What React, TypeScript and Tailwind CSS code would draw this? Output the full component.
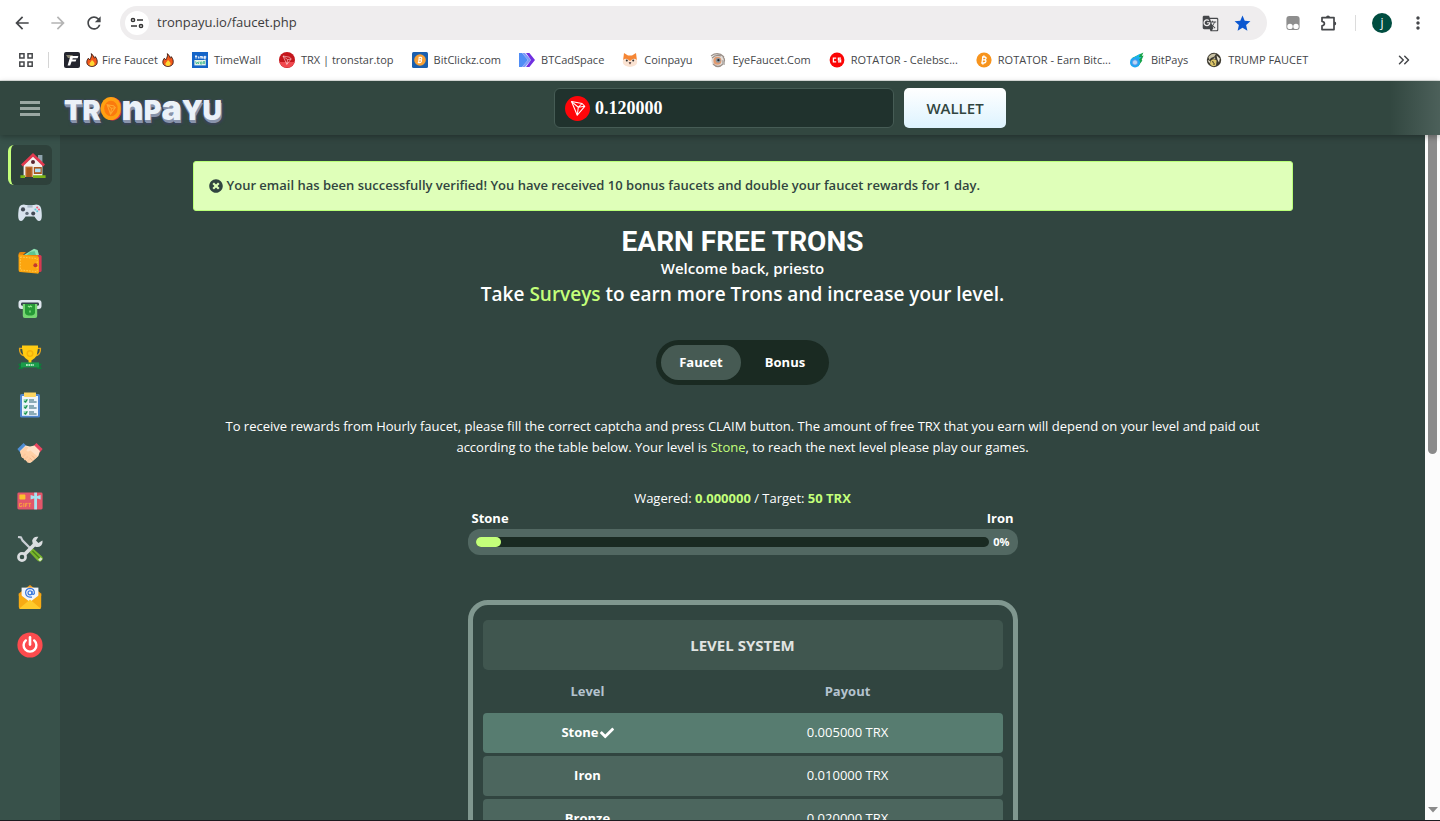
import React from 'react';
import { FaCheck, FaTimesCircle } from 'react-icons/fa';
import { MdArrowBack, MdArrowForward, MdGTranslate, MdMoreVert, MdRefresh, MdStar } from 'react-icons/md';
import { ChevronsRight } from 'lucide-react';

const TronMark: React.FC<{ className?: string; stroke?: string }> = ({ className, stroke = '#fff' }) => (
  <svg viewBox="0 0 24 24" className={className} fill="none" stroke={stroke} strokeWidth="1.4" strokeLinejoin="round">
    <path d="M3.4 3.4 L17.4 6 L21 9.8 L11 21.6 Z" />
    <path d="M3.4 3.4 L12.4 11 L21 9.8 M12.4 11 L17.4 6 M12.4 11 L11 21.6" />
  </svg>
);

const Fire: React.FC = () => (
  <svg viewBox="0 0 12 16" className="w-3 h-4 shrink-0">
    <path d="M5.4 1.6 C7 3.4 8 4.8 8.4 6.2 C9 5.8 9.2 5.2 9.2 4.6 C11 6.8 11.4 8.8 11.2 10.6 C11 13 9 14.4 6 14.4 C3 14.4 1 13 .8 10.6 C.7 8.6 1.4 7.4 2.4 6.2 C3.2 7.2 3.4 7.6 3.6 8 C5 6.2 5.8 3.8 5.4 1.6 Z" fill="#f2581c" stroke="#3a1a10" strokeWidth=".9" />
    <path d="M6 8 C8 9.6 8.8 11 8.6 12 C8.4 13.2 7.4 14 6 14 C4.4 14 3.4 13.2 3.4 12 C3.4 10.8 5 10 6 8 Z" fill="#fdd835" />
  </svg>
);

const favicons = {
  fire: (
    <svg viewBox="0 0 16 16" className="w-4 h-4">
      <rect width="16" height="16" rx="2" fill="#23252e" />
      <path d="M2 3 H9 L7 6 H4 Z" fill="#8a8672" />
      <path d="M6.4 4 H14.4 L13.6 6.2 H8.8 L8.3 7.6 H12.4 L11.6 9.6 H7.6 L6.2 13.4 H3.6 Z" fill="#fff" />
    </svg>
  ),
  timewall: (
    <svg viewBox="0 0 16 16" className="w-4 h-4">
      <rect width="16" height="16" fill="#1565c8" />
      <path d="M3 4.6 H5.2 M4 3 V6.6 M6.4 4.4 V6.6 M8 6.6 V4.6 H10.6 V6.6 M9.3 4.6 V6.6 M12 5.6 H13.8 V4.4 H12 V6.8 H14" stroke="#fff" strokeWidth=".9" fill="none" />
      <rect x="2.4" y="8" width="11.4" height="5.4" fill="#e8f5e9" />
      <path d="M3.6 9.4 L4.4 12 L5.4 10 L6.4 12 L7 9.4 M8.4 10 H10 V12 H8.4 Z M11.4 9 V12 M12.6 9 V12" stroke="#35b58a" strokeWidth=".8" fill="none" />
    </svg>
  ),
  trx: (
    <svg viewBox="0 0 16 16" className="w-4 h-4">
      <circle cx="8" cy="8" r="8" fill="#c4161c" />
      <path d="M.4 10 A8 8 0 0 0 15.6 10 Z" fill="#f0494f" />
      <path d="M4 4 L10.6 5.2 L12.2 7 L7.8 12.4 Z M4 4 L8.6 7.6 L12.2 7 M8.6 7.6 L7.8 12.4" fill="none" stroke="#ffd9d9" strokeWidth=".6" />
    </svg>
  ),
  bitclickz: (
    <svg viewBox="0 0 16 16" className="w-4 h-4">
      <rect width="16" height="16" rx="1.5" fill="#1a5fae" />
      <circle cx="8" cy="8" r="5.8" fill="#f7a035" />
      <path d="M6.6 5.4 H8.8 Q10 5.6 9.6 6.8 Q9.4 7.8 8.4 7.8 Q9.8 8 9.4 9.4 Q9 10.6 7.8 10.6 H5.8 M7.2 5.4 L6.6 10.6 M6.9 7.9 H8.6" fill="none" stroke="#fff" strokeWidth="1.1" />
    </svg>
  ),
  btcad: (
    <svg viewBox="0 0 16 16" className="w-4 h-4">
      <path d="M0 1 H3 L9 8 L3 15 H0 Z" fill="#4f8df5" />
      <path d="M3 1 H6 L12 8 L6 15 H3 L9 8 Z" fill="#7f9cf8" />
      <path d="M7 1 H10.4 L16 8 L10.4 15 H7 L12 8 Z" fill="#7030e0" />
    </svg>
  ),
  coinpayu: (
    <svg viewBox="0 0 16 16" className="w-4 h-4">
      <path d="M2 1 L6 3.4 H10 L14 1 L15 9 H1 Z" fill="#f58634" />
      <path d="M1 8 Q3 6 5.4 7 L8 9 L10.6 7 Q13 6 15 8 Q16 12 12.6 13.8 Q8 16 3.4 13.8 Q0 12 1 8 Z" fill="#fbe3d2" />
      <circle cx="4.8" cy="8.6" r="1" fill="#333" />
      <circle cx="11.2" cy="8.6" r="1" fill="#333" />
      <path d="M6.6 10.2 H9.4 L8 12.4 Z" fill="#4a3030" />
    </svg>
  ),
  eye: (
    <svg viewBox="0 0 16 16" className="w-4 h-4">
      <circle cx="8" cy="8.4" r="6.6" fill="#e3ddd8" />
      <path d="M1 4 Q8 -1 14 5 M2 6 Q6 2 11 4 M3 12 Q8 17 13 12 Q16 8 13 5" fill="none" stroke="#9a8f88" strokeWidth="1.2" />
      <circle cx="7.4" cy="8.8" r="4" fill="#e09a70" />
      <circle cx="8.2" cy="8.4" r="2.4" fill="#8796a2" />
      <circle cx="8.4" cy="8.2" r="1.1" fill="#222" />
      <path d="M12 8 Q15 8 15 13 L12 12 Z" fill="#b5b0ac" />
    </svg>
  ),
  celebs: (
    <svg viewBox="0 0 16 16" className="w-4 h-4">
      <circle cx="8" cy="8" r="7.4" fill="#fb0505" />
      <path d="M7.2 6.2 H4.4 V9.8 H7.2 M12 6.2 H9.4 V8 H11.6 V9.8 H9" fill="none" stroke="#fff" strokeWidth="1.3" />
    </svg>
  ),
  bitcoin: (
    <svg viewBox="0 0 16 16" className="w-4 h-4">
      <circle cx="8" cy="8" r="7.6" fill="#f7941d" />
      <path d="M6 5 H8.6 Q10.4 5.2 10 6.6 Q9.6 7.8 8.4 7.8 Q10.4 8 9.8 9.8 Q9.4 11 7.8 11 H5.2 M6.8 5 L6 11 M6.4 7.9 H8.8 M8 3.4 L7.8 5 M7 11 L6.8 12.6" fill="none" stroke="#fff" strokeWidth="1.3" />
    </svg>
  ),
  bitpays: (
    <svg viewBox="0 0 16 16" className="w-4 h-4">
      <path d="M3 6 L14.4 .6 L12.8 4 L14.6 3.6 L12.6 8 L13.4 8.4 L9 14.4 Z" fill="#16a34a" />
      <path d="M1.4 7.4 L11.4 1.4 L10 5 L12.4 5 L8 10 Z" fill="#19b5e8" />
      <circle cx="6" cy="10.4" r="5" fill="#22a6f2" />
      <circle cx="6" cy="10.4" r="2.6" fill="#b9d7f5" stroke="#5d8fe8" strokeWidth=".8" />
    </svg>
  ),
  trump: (
    <svg viewBox="0 0 16 16" className="w-4 h-4">
      <circle cx="8" cy="8" r="7.2" fill="#3d3a30" />
      <path d="M2.4 5 Q5 1 10 1.8 L8.4 4.4 L5 6 L3.4 8 Z" fill="#c9c2a4" />
      <path d="M4.6 9 Q7 6 10.6 8.4 L10 13.4 Q6 15.4 4 12 Z" fill="#dcc568" />
      <path d="M10.6 3.6 L13.8 6.6 L13 10.6 L11.4 7.6 Z M1.6 8 L4 9 L3.6 11.6 Z M8 5.4 L9.6 6.2 L7.6 7 Z" fill="#eee9d8" />
      <path d="M6 9.6 L8 10.4 M7 12 H9" stroke="#2a2820" strokeWidth=".9" />
    </svg>
  ),
};

const bookmarks = [
  { icon: favicons.timewall, label: 'TimeWall' },
  { icon: favicons.trx, label: 'TRX | tronstar.top' },
  { icon: favicons.bitclickz, label: 'BitClickz.com' },
  { icon: favicons.btcad, label: 'BTCadSpace' },
  { icon: favicons.coinpayu, label: 'Coinpayu' },
  { icon: favicons.eye, label: 'EyeFaucet.Com' },
  { icon: favicons.celebs, label: 'ROTATOR - Celebsc...' },
  { icon: favicons.bitcoin, label: 'ROTATOR - Earn Bitc...' },
  { icon: favicons.bitpays, label: 'BitPays' },
  { icon: favicons.trump, label: 'TRUMP FAUCET' },
];

const BrowserBar: React.FC = () => (
  <div className="bg-white text-[#45474a] border-b border-[#dfe3e1] shrink-0">
    <div className="h-[46px] flex items-center pl-3 pr-3">
      <div className="flex items-center gap-4 w-27">
        <button aria-label="Back"><MdArrowBack size={20} /></button>
        <button aria-label="Forward" className="text-[#b4b4b4]"><MdArrowForward size={20} /></button>
        <button aria-label="Reload"><MdRefresh size={20} /></button>
      </div>
      <div className="flex-1 h-[34px] rounded-full bg-[#efedee] flex items-center pl-[5px] pr-[15px]">
        <button aria-label="Site information" className="w-6 h-6 rounded-full bg-white flex items-center justify-center">
          <svg viewBox="0 0 14 14" className="w-[14px] h-[14px]" fill="none" stroke="#333" strokeWidth="1.5">
            <circle cx="3" cy="4" r="1.6" />
            <path d="M7 4 H13 M1 10 H7" />
            <circle cx="11" cy="10" r="1.6" />
          </svg>
        </button>
        <input
          aria-label="Address"
          defaultValue="tronpayu.io/faucet.php"
          className="flex-1 ml-2 bg-transparent text-[13px] text-[#3c3c3c] outline-none"
        />
        <button aria-label="Translate" className="mr-[14px]"><MdGTranslate size={17} /></button>
        <button aria-label="Bookmark" className="text-[#0b57d0]"><MdStar size={19} /></button>
      </div>
      <div className="flex items-center ml-[18px]">
        <svg viewBox="0 0 16 16" className="w-4 h-4">
          <rect x="1.4" y="1" width="13.2" height="14" rx="3" fill="#8e8e8e" />
          <circle cx="5" cy="11.4" r="2.7" fill="#fff" />
          <circle cx="11" cy="11.4" r="2.7" fill="#fff" />
        </svg>
        <button aria-label="Extensions" className="ml-[18px]">
          <svg viewBox="0 0 20 20" className="w-5 h-5">
            <path d="M3 4.6 H15 V16.6 H3 V12.8 Q5.4 12.4 5.4 10.6 Q5.4 8.8 3 8.4 Z" fill="none" stroke="#45474a" strokeWidth="1.7" strokeLinejoin="round" />
            <path d="M7 4.4 A2 2 0 0 1 11 4.4 Z M15.2 8.6 A2 2 0 0 1 15.2 12.6 Z" fill="#45474a" />
          </svg>
        </button>
        <div className="w-px h-4 bg-[#dcdcdc] ml-4" />
        <button className="ml-4 w-5 h-5 rounded-full bg-[#004d40] text-white text-xs leading-none flex items-center justify-center">j</button>
        <button aria-label="Menu" className="ml-4"><MdMoreVert size={20} /></button>
      </div>
    </div>
    <div className="h-[34px] flex items-center pl-[18px] pr-[27px] pb-[6px] text-[11px] whitespace-nowrap">
      <svg viewBox="0 0 16 16" className="w-4 h-4 shrink-0" fill="none" stroke="#45474a" strokeWidth="1.5">
        <path d="M1.8 1.8 H6 V6 H1.8 Z M10 1.8 H14.2 V6 H10 Z M1.8 10 H6 V14.2 H1.8 Z M10 10 H14.2 V14.2 H10 Z" />
      </svg>
      <div className="w-px h-4 bg-[#d5d5d5] ml-[14px] mr-[15px]" />
      <nav className="flex-1 flex items-center gap-[18px]">
        <a href="#firefaucet" className="flex items-center gap-[6px]">
          {favicons.fire}
          <span className="flex items-center gap-1"><Fire /> Fire Faucet <Fire /></span>
        </a>
        {bookmarks.map((b) => (
          <a key={b.label} href="#bookmark" className="flex items-center gap-[6px]">
            {b.icon}
            <span>{b.label}</span>
          </a>
        ))}
      </nav>
      <ChevronsRight size={18} />
    </div>
  </div>
);

const Logo: React.FC = () => (
  <a
    href="#home"
    aria-label="Tronpayu"
    className="flex items-baseline font-['Inter'] font-black text-[27px] leading-none text-[#ebf1f8] [text-shadow:0_1px_0_#8893ab,0_2px_0_#8893ab,1px_3px_0_#8893ab,-2px_0_1px_#3e4a5b,2px_-1px_1px_#3e4a5b,0_5px_2px_#3a4455,3px_4px_2px_#3a4455]"
  >
    TR
    <svg viewBox="0 0 24 26" className="w-[23px] h-[25px] -mx-px self-center">
      <ellipse cx="13" cy="13.4" rx="10.6" ry="12" fill="#e8304a" />
      <ellipse cx="11.4" cy="13" rx="10.8" ry="12" fill="#ffa012" />
      <ellipse cx="11.4" cy="13" rx="7" ry="8.2" fill="#fb7a0e" />
      <path d="M7.4 9 L14 10 L16 12 L11 19 Z M7.4 9 L12 13 L16 12 M12 13 L11 19" fill="none" stroke="#ffa830" strokeWidth="1.1" />
    </svg>
    <span className="text-[34px] leading-none">n</span>P<span className="text-[34px] leading-none">a</span>YU
  </a>
);

const Header: React.FC = () => (
  <header className="relative z-10 h-[54px] shrink-0 flex items-center bg-[linear-gradient(to_right,#324740_calc(100%-50px),#4c605a)] shadow-[0_2px_6px_rgba(0,0,0,0.3)]">
    <div className="w-[226px] flex items-center pl-5 gap-6">
      <button aria-label="Toggle menu" className="flex flex-col gap-[3px]">
        <span className="w-5 h-[3px] bg-[#9aa7a2]" />
        <span className="w-5 h-[3px] bg-[#9aa7a2]" />
        <span className="w-5 h-[3px] bg-[#9aa7a2]" />
      </button>
      <Logo />
    </div>
    <div className="flex-1 flex items-center justify-center gap-[10px]">
      <div className="w-[340px] h-10 rounded-md border border-[#465c55] bg-[#20322d] flex items-center gap-[5px] pl-[10px]">
        <span className="w-[25px] h-[25px] rounded-full bg-[#ff060a] flex items-center justify-center">
          <TronMark className="w-[18px] h-[18px]" />
        </span>
        <span className="font-['Liberation_Serif',serif] font-bold text-lg text-white">0.120000</span>
      </div>
      <button className="w-[102px] h-10 rounded-[5px] bg-linear-to-b from-white to-[#ddf3fe] text-[#314540] text-[15px] font-semibold">WALLET</button>
    </div>
    <div className="w-[106px]" />
  </header>
);

const menu = [
  {
    label: 'Home',
    icon: (
      <svg viewBox="0 0 26 26" className="w-[26px] h-[26px]">
        <rect x="18" y="3" width="4.4" height="9" fill="#8fa3ad" />
        <path d="M3.6 13 L13 4 L22.4 13 V25 H3.6 Z" fill="#f3f0f0" />
        <path d="M13 1 L25 12.6 L23.2 14.4 L13 4.8 L2.8 14.4 L1 12.6 Z" fill="#e2394f" />
        <circle cx="13" cy="10" r="2" fill="#5a2430" />
        <rect x="5.4" y="14.6" width="7.2" height="10.4" fill="#c0692a" />
        <rect x="6.8" y="16" width="4.4" height="9" fill="#a9571f" />
        <rect x="13.8" y="15" width="8" height="7" fill="#a9571f" />
        <rect x="15" y="16.6" width="5.6" height="3.6" fill="#a9dcf5" />
        <path d="M.4 23.2 H5 V26 H.4 Z M13 23.2 H25.6 V26 H13 Z" fill="#7cb518" />
      </svg>
    ),
  },
  {
    label: 'Games',
    icon: (
      <svg viewBox="0 0 24 24" className="w-6 h-6">
        <path d="M3.4 4 Q6 3 8 4 H16 Q18 3 20.6 4 Q23 5 23.4 9 Q24.4 17 23 19 Q21 21.4 18.6 18.6 L16.4 15.6 H7.6 L5.4 18.6 Q3 21.4 1 19 Q-.4 17 .6 9 Q1 5 3.4 4 Z" fill="#d8e3ee" />
        <rect x="9.4" y="4" width="5.2" height="2.6" fill="#a9b9c9" />
        <circle cx="5" cy="8.4" r="2.1" fill="#424a55" />
        <circle cx="9" cy="12.4" r="1.7" fill="#5f6b78" />
        <circle cx="15.2" cy="12.4" r="2" fill="#424a55" />
        <circle cx="17.4" cy="8.4" r="1" fill="#5ec8d8" />
        <circle cx="21" cy="8.4" r="1" fill="#ef5a74" />
        <circle cx="19.2" cy="6.6" r="1" fill="#ef5a74" />
        <circle cx="19.2" cy="10.2" r="1" fill="#5ec8d8" />
      </svg>
    ),
  },
  {
    label: 'Wallet',
    icon: (
      <svg viewBox="0 0 24 26" className="w-6 h-[26px]">
        <path d="M6 7 L16 .8 L19.6 2 L21 7 Z" fill="#8fe3b4" />
        <path d="M12 4 L16.6 3 L18 7 L9 7 Z" fill="#5fc590" />
        <rect x="17" y="7" width="6.6" height="17" rx="1.6" fill="#d63a52" />
        <path d="M.6 6 Q.6 4 3 4 H8 L5 7 H20 V9 H.6 Z" fill="#e8850c" />
        <path d="M.6 6.4 L20 8.4 Q21 8.6 21 10 V24 Q21 26 19 25.6 L2 24 Q.6 23.8 .6 22 Z" fill="#fca50f" />
        <path d="M2.4 9 L19.2 10.6 V23.6 L2.4 22 Z" fill="none" stroke="#ffd25a" strokeWidth=".8" strokeDasharray="1.6 1.2" />
        <circle cx="17.4" cy="17.2" r="2" fill="#c4372f" />
      </svg>
    ),
  },
  {
    label: 'Withdraw',
    icon: (
      <svg viewBox="0 0 24 24" className="w-6 h-6">
        <rect x=".5" y="3" width="23" height="9" rx="3" fill="#dfe6ee" />
        <rect x="3" y="5.6" width="18" height="3.2" rx="1.4" fill="#33424a" />
        <path d="M4.8 7 H19.2 V19 Q19.2 21 17.2 21 H6.8 Q4.8 21 4.8 19 Z" fill="#76d672" />
        <path d="M7 7 H17 V16 Q16 18.6 12 18.6 Q8 18.6 7 16 Z" fill="#269a36" />
        <path d="M10 9 L11.4 10 L12.6 9 L14 10 M12 13.6 V15.6" fill="none" stroke="#8ee88b" strokeWidth="1.3" />
      </svg>
    ),
  },
  {
    label: 'Leaderboard',
    icon: (
      <svg viewBox="0 0 24 26" className="w-6 h-[26px]">
        <path d="M5 4.4 H1.6 Q1 11 7 12 M19 4.4 H22.4 Q23 11 17 12" fill="none" stroke="#e3a51c" strokeWidth="1.4" />
        <path d="M4 1.4 H20 V4 L18.8 11 Q17.4 14.8 13.4 16.4 V19 H10.6 V16.4 Q6.6 14.8 5.2 11 L4 4 Z" fill="#ffcc12" />
        <circle cx="12" cy="9.6" r="2.8" fill="#ffcc12" stroke="#f5b20a" strokeWidth="1.4" />
        <path d="M0 19.8 H5 V25 H0 L1.8 22.4 Z M24 19.8 H19 V25 H24 L22.2 22.4 Z" fill="#0f7c3a" />
        <rect x="3" y="18.4" width="18" height="5" fill="#1a9c4b" />
        <path d="M8 21 H16" stroke="#d8ffe4" strokeWidth="1.4" strokeDasharray="1.8 .6" />
      </svg>
    ),
  },
  {
    label: 'Tasks',
    icon: (
      <svg viewBox="0 0 22 26" className="w-[22px] h-[26px]">
        <rect x="1" y="2" width="20" height="23.6" rx="1.6" fill="#4f86cf" />
        <rect x="3" y="4" width="16" height="19.8" fill="#eef4fb" />
        <path d="M5 .6 H17 V4 Q17 5 16 5 H6 Q5 5 5 4 Z" fill="#fcd462" />
        <path d="M4.6 7 H8.2 V10.6 H4.6 Z M4.6 13 H8.2 V16.6 H4.6 Z M4.6 19 H8.2 V22.6 H4.6 Z" fill="#9ddfb9" />
        <path d="M5.4 9 L6.4 10 L8.4 7.4 M5.4 15 L6.4 16 L8.4 13.4 M5.4 21 L6.4 22 L8.4 19.4" fill="none" stroke="#1d8f52" strokeWidth="1.2" />
        <path d="M10 8 H15 M10 10 H17.6 M10 14 H15 M10 16 H17.6 M10 20 H15 M10 22 H17.6" stroke="#2b6274" strokeWidth="1.1" />
      </svg>
    ),
  },
  {
    label: 'Referrals',
    icon: (
      <svg viewBox="0 0 26 24" className="w-[26px] h-6">
        <path d="M.4 8 L6.6 2 L9.8 5.2 L3.2 11.4 Z" fill="#4f8ed6" />
        <path d="M25.6 8 L19.4 2 L16.2 5.2 L22.8 11.4 Z" fill="#e84560" />
        <path d="M3 10 L8.6 4.6 L13 5.6 L17.4 4.6 L23 10 L21.4 15 L14.6 21 Q13 22.4 11.4 21.4 L4.4 15.4 Z" fill="#ffe0c6" />
        <path d="M3.2 10.6 L8.6 5.4 L11.4 6.4 L9.4 9.4 Q10.6 11.4 13.4 9.4 L20.8 15.6 L14.6 21 Q13 22.4 11.4 21.4 L4.4 15.4 Z" fill="#ffd0a6" />
        <path d="M18 17.6 L15 14.6 M15.6 19.8 L12.6 16.8" fill="none" stroke="#f0b088" strokeWidth="1" />
        <path d="M5.6 16 L8 13.4 M8 18.4 L10.4 15.8 M10.6 20.6 L12.4 18.4" stroke="#fbc79c" strokeWidth="1.8" strokeLinecap="round" />
      </svg>
    ),
  },
  {
    label: 'Gift codes',
    icon: (
      <svg viewBox="0 0 26 18" className="w-[26px] h-[18px]">
        <rect x=".4" y=".6" width="25.2" height="16.8" rx="1.4" fill="#e2566a" />
        <rect x="2.4" y="2.6" width="6" height="5" rx=".8" fill="#fbc02d" />
        <rect x="17.2" y=".6" width="2.8" height="16.8" fill="#a7e3f2" />
        <path d="M13.6 3 L18.6 4.4 L23.6 3 V7.4 L18.6 6 L13.6 7.4 Z" fill="#a7e3f2" />
        <path d="M5 11.4 H2.6 V14.6 H4.8 V13.2 M6.8 11 V15 M8.6 15 V11.4 H10.6 M8.6 13 H10.2 M11.4 11.4 H14 M12.7 11.4 V15" fill="none" stroke="#f9a03f" strokeWidth="1" />
      </svg>
    ),
  },
  {
    label: 'Tools',
    icon: (
      <svg viewBox="0 0 26 26" className="w-[26px] h-[26px]">
        <path d="M1 1 L4 1.4 L5.4 4.4 L14 13" fill="none" stroke="#c9ced4" strokeWidth="2.2" strokeLinejoin="round" />
        <path d="M12.4 16 L16 12.6 L25 20.6 Q26.4 22.4 24.8 24.4 Q22.6 26.6 20.6 24.8 Z" fill="#78b52c" />
        <path d="M15.4 15 L23.4 23" stroke="#4c7d1d" strokeWidth="1.2" />
        <path d="M23.6 21.2 L25.6 23 L23 25.6 L21.2 23.6 Z" fill="#d6e4c4" />
        <path d="M7 19 L19 7" stroke="#dadde0" strokeWidth="3.8" />
        <path d="M25.4 4.6 L21.4 7 L19 4.6 L21.4 .8 Q16.4 -.2 15.2 4.6 Q15 8.4 18 10.4 Q21.4 11.8 24.2 9.4 Q26 7.4 25.4 4.6 Z" fill="#dadde0" />
        <circle cx="5" cy="21" r="3.6" fill="none" stroke="#dadde0" strokeWidth="2.6" />
      </svg>
    ),
  },
  {
    label: 'Contact',
    icon: (
      <svg viewBox="0 0 24 26" className="w-6 h-[26px]">
        <path d="M.8 9.6 L12 1 L23.2 9.6 V12 H.8 Z" fill="#f39a1a" />
        <path d="M3.6 3.6 H20.4 V18 H3.6 Z" fill="#f2f5fa" />
        <circle cx="12" cy="8.8" r="2" fill="none" stroke="#3776dd" strokeWidth="1.2" />
        <path d="M14 7 V9.6 Q15.2 11.4 16.4 9.4 Q16.6 4.6 12 4.4 Q7.6 4.8 7.6 8.8 Q8 13 12 13.2 H14" fill="none" stroke="#3776dd" strokeWidth="1.2" />
        <path d="M.8 9.6 L12 18 L23.2 9.6 V23 Q23.2 25 21.4 25 H2.6 Q.8 25 .8 23 Z" fill="#f7ab14" />
        <path d="M1.4 24.4 L12 15.6 L22.6 24.4 Q22 25 21.4 25 H2.6 Q2 25 1.4 24.4 Z" fill="#ffca2b" />
      </svg>
    ),
  },
  {
    label: 'Logout',
    icon: (
      <svg viewBox="0 0 26 26" className="w-[26px] h-[26px]">
        <circle cx="13" cy="13" r="12.6" fill="#fc4b4e" />
        <path d="M8.8 8.4 A6.4 6.4 0 1 0 17.2 8.4" fill="none" stroke="#fff" strokeWidth="2.4" strokeLinecap="round" />
        <path d="M13 5.4 V12.6" stroke="#fff" strokeWidth="2.6" strokeLinecap="round" />
      </svg>
    ),
  },
];

const Sidebar: React.FC = () => (
  <aside className="w-15 shrink-0 bg-[#38514a] pt-[10px] px-2">
    <nav className="flex flex-col gap-2">
      {menu.map((item, i) => (
        <a
          key={item.label}
          href="#menu"
          aria-label={item.label}
          className={
            i === 0
              ? 'h-10 rounded-md flex items-center justify-center bg-[#2e413b] border-l-3 border-[#c3ff7a] pl-[2px]'
              : 'h-10 rounded-md flex items-center justify-center'
          }
        >
          {item.icon}
        </a>
      ))}
    </nav>
  </aside>
);

const levels = [
  { name: 'Stone', payout: '0.005000 TRX', current: true },
  { name: 'Iron', payout: '0.010000 TRX', current: false },
  { name: 'Bronze', payout: '0.020000 TRX', current: false },
];

const LevelTable: React.FC = () => (
  <section className="mt-[45px] w-full max-w-[550px] rounded-[20px] border-5 border-[#80978f] px-[10px] pt-[15px] pb-[10px] text-[13px]">
    <h2 className="h-[50px] rounded-[5px] bg-[#40564f] flex items-center justify-center text-[15px] font-bold text-[#e0e4e2]">LEVEL SYSTEM</h2>
    <table className="w-full table-fixed border-separate border-spacing-x-0 border-spacing-y-[3px] text-center">
      <thead>
        <tr className="h-[37px] text-[#b4c3cf]">
          <th className="w-[210px] font-bold">Level</th>
          <th className="font-bold">Payout</th>
        </tr>
      </thead>
      <tbody>
        {levels.map((l) => (
          <tr key={l.name} className={l.current ? 'h-10 [&>td]:bg-[#577c70]' : 'h-10 [&>td]:bg-[#4c665e]'}>
            <td className="rounded-l font-bold">
              <span className="inline-flex items-center gap-px">
                {l.name}
                {l.current && <FaCheck size={14} />}
              </span>
            </td>
            <td className="rounded-r">{l.payout}</td>
          </tr>
        ))}
      </tbody>
    </table>
  </section>
);

const Faucet: React.FC = () => (
  <main className="flex-1 overflow-hidden flex flex-col items-center pt-[26px] px-5 text-white">
    <div className="w-full max-w-[1100px] h-[50px] shrink-0 rounded-[3px] border border-[#b9ff78] bg-[#dfffb9] text-[#314540] text-[13px] font-semibold flex items-center gap-1 px-[15px]">
      <button aria-label="Dismiss"><FaTimesCircle size={14} /></button>
      Your email has been successfully verified! You have received 10 bonus faucets and double your faucet rewards for 1 day.
    </div>

    <h1 className="mt-[17px] font-['Roboto'] text-[28px] leading-7 font-bold">EARN FREE TRONS</h1>
    <p className="text-[15px] leading-6 font-semibold">Welcome back, priesto</p>
    <p className="text-[19px] leading-7 font-semibold">
      Take <a href="#surveys" className="text-[#c3ff7a]">Surveys</a> to earn more Trons and increase your level.
    </p>

    <div className="mt-8 p-[5px] rounded-full bg-[#1a2a22] flex gap-[5px] text-[13px] font-bold">
      <button className="w-20 h-[35px] rounded-full bg-[#465a53]">Faucet</button>
      <button className="w-[78px] h-[35px] rounded-full">Bonus</button>
    </div>

    <p className="mt-[31px] w-full max-w-[1080px] text-[13px] leading-[21px] text-center">
      To receive rewards from Hourly faucet, please fill the correct captcha and press CLAIM button. The amount of free TRX that you earn will depend on your level and paid out
      according to the table below. Your level is <span className="text-[#c3ff7a]">Stone</span>, to reach the next level please play our games.
    </p>

    <div className="mt-[30px] w-full max-w-[550px] text-[13px] leading-5">
      <p className="text-center">
        Wagered: <b className="text-[#c3ff7a]">0.000000</b> / Target: <b className="text-[#c3ff7a]">50 TRX</b>
      </p>
      <div className="flex justify-between px-1 font-bold">
        <span>Stone</span>
        <span>Iron</span>
      </div>
      <div className="mt-px h-[26px] rounded-xl bg-[#526862] flex items-center gap-1 px-2">
        <div className="flex-1 h-[10px] rounded-full bg-[#1a2a22]">
          <div className="w-[5%] h-full rounded-full bg-[#c3ff7a]" />
        </div>
        <span className="text-[11px] font-bold">0%</span>
      </div>
    </div>

    <LevelTable />
  </main>
);

const App: React.FC = () => {
  return (
    <div className="h-screen flex flex-col overflow-hidden bg-[#314540] font-['Open_Sans',sans-serif]">
      <BrowserBar />
      <Header />
      <div className="flex-1 min-h-0 flex border-b border-[#1b1b1f]">
        <Sidebar />
        <Faucet />
        <div className="w-[15px] bg-[#fcfcfc] flex flex-col items-center justify-between pb-[7px]">
          <div className="w-[9px] h-[47%] rounded-b-full bg-[#8b8b8b]" />
          <svg viewBox="0 0 10 6" className="w-[10px] h-[6px]"><path d="M0 0 H10 L5 5.6 Z" fill="#8b8b8b" /></svg>
        </div>
      </div>
    </div>
  );
};

export default App;
